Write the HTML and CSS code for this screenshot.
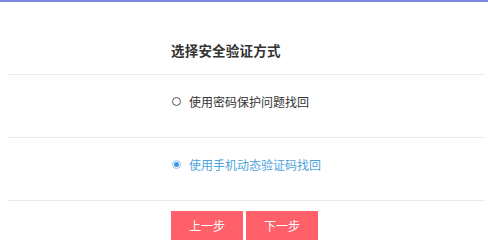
FILE: index.html
```html
<!DOCTYPE html>
<html lang="zh">
<head>
<meta charset="utf-8">
<link rel="stylesheet" href="styles.css">
</head>
<body>
<div class="topbar"></div>
<div class="panel">
  <div class="head"><h2 class="title">选择安全验证方式</h2></div>
  <div class="row">
    <label class="opt"><span class="radio"></span><span class="label">使用密码保护问题找回</span></label>
  </div>
  <div class="row">
    <label class="opt on"><span class="radio"></span><span class="label">使用手机动态验证码找回</span></label>
  </div>
  <div class="actions">
    <button class="btn">上一步</button>
    <button class="btn">下一步</button>
  </div>
</div>
</body>
</html>
```
FILE: styles.css
```css
html, body {
  margin: 0;
  padding: 0;
  background: #fff;
  font-family: "Microsoft YaHei", "Noto Sans CJK SC", "Liberation Sans", sans-serif;
  color: #333;
}
.topbar {
  height: 2px;
  background: #7b87e4;
}
.panel {
  margin: 0 3px 0 7px;
}
.head {
  height: 73px;
  border-bottom: 1px solid #ebebeb;
  padding-left: 164px;
  box-sizing: border-box;
}
.title {
  margin: 0;
  padding-top: 40px;
  font-size: 13.5px;
  line-height: 16px;
  font-weight: 600;
  color: #333;
  letter-spacing: 0.2px;
}
.row {
  height: 63px;
  border-bottom: 1px solid #ebebeb;
  padding-left: 165px;
  box-sizing: border-box;
}
.opt {
  display: flex;
  align-items: center;
  height: 16px;
  padding-top: 18px;
  font-size: 12px;
  color: #333;
}
.radio {
  width: 7px;
  height: 7px;
  border: 1px solid #555;
  border-radius: 50%;
  margin-right: 8px;
  flex: none;
  position: relative;
}
.opt.on { color: #4ea3dc; }
.opt.on .radio {
  border-color: #8fc3ee;
  background: #fff;
}
.opt.on .radio::after {
  content: "";
  position: absolute;
  left: 1px;
  top: 1px;
  width: 5px;
  height: 5px;
  border-radius: 50%;
  background: #3f97e4;
}
.actions {
  display: flex;
  gap: 3px;
  padding: 10px 0 0 164px;
}
.btn {
  width: 72px;
  height: 29px;
  border: 0;
  margin: 0;
  padding: 0;
  background: #ff6069;
  color: #fff;
  font-family: inherit;
  font-size: 12px;
}
```
